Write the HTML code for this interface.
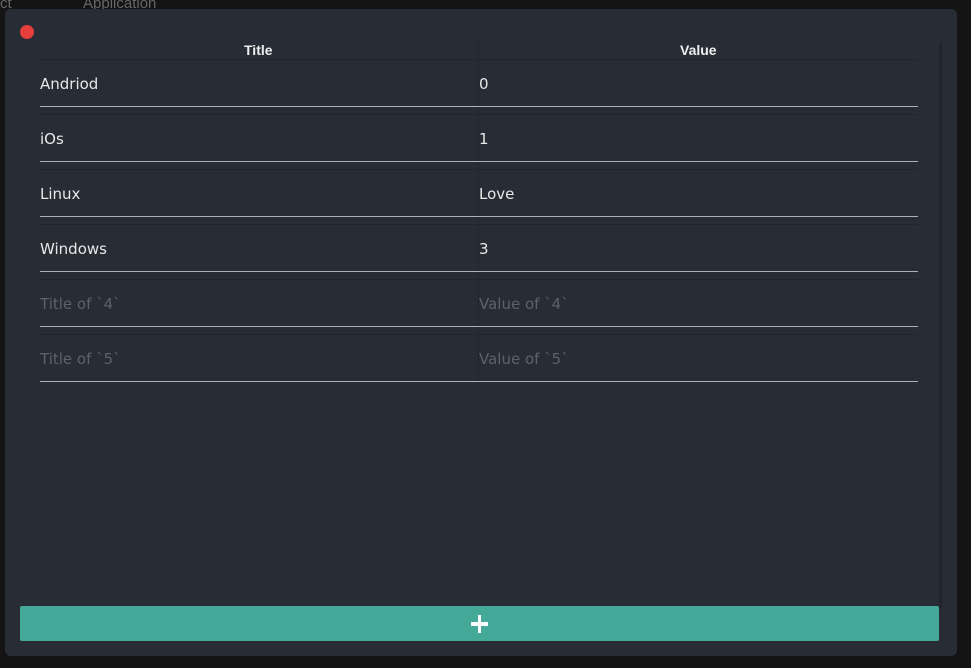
<!DOCTYPE html>
<html><head><style>
body{margin:0;width:971px;height:668px;background:#141414;position:relative;overflow:hidden;font-family:"Liberation Sans","DejaVu Sans",sans-serif}
.top{position:absolute;left:0;top:0;color:#666;font-size:15px}
.win{position:absolute;left:5px;top:9px;width:952px;height:647px;background:#282c35;border-radius:6px}
.dot{position:absolute;left:15px;top:16px;width:14px;height:14px;border-radius:50%;background:#e53e3b}
.sb{position:absolute;left:934px;top:33px;width:3px;height:567px;background:#22252d}
.h{position:absolute;top:33px;color:#eee;font-weight:bold;font-size:14px}
.vd{position:absolute;left:473px;top:30px;width:1px;height:343px;background:#22252d}
.row{position:absolute;left:35px;width:878px;height:46px;border-top:1px solid #22252d;border-bottom:1px solid #b0b0b0}
.row span{position:absolute;top:15px;font-family:"DejaVu Sans",sans-serif;font-size:15px;color:#e8e8e8}
.row span.p{color:#5d6168}
.btn{position:absolute;left:15px;top:597px;width:919px;height:35px;background:#45a99a;border-radius:2px}
.btn:before{content:"";position:absolute;left:451px;top:16px;width:17px;height:4px;background:#fff}
.btn:after{content:"";position:absolute;left:458px;top:9px;width:3px;height:18px;background:#fff}
</style></head><body>
<div class="top"><span style="position:absolute;left:0;top:-5px">ct</span><span style="position:absolute;left:83px;top:-5px;white-space:nowrap">Application</span></div>
<div class="win">
<div class="dot"></div>
<div class="sb"></div>
<div class="h" style="left:239px">Title</div>
<div class="h" style="left:675px">Value</div>
<div class="vd"></div>
<div class="row" style="top:50px"><span style="left:0">Andriod</span><span style="left:439px">0</span></div>
<div class="row" style="top:105px"><span style="left:0">iOs</span><span style="left:439px">1</span></div>
<div class="row" style="top:160px"><span style="left:0">Linux</span><span style="left:439px">Love</span></div>
<div class="row" style="top:215px"><span style="left:0">Windows</span><span style="left:439px">3</span></div>
<div class="row" style="top:270px"><span class="p" style="left:0">Title of `4`</span><span class="p" style="left:439px">Value of `4`</span></div>
<div class="row" style="top:325px"><span class="p" style="left:0">Title of `5`</span><span class="p" style="left:439px">Value of `5`</span></div>
<div class="btn"></div>
</div>
</body></html>
